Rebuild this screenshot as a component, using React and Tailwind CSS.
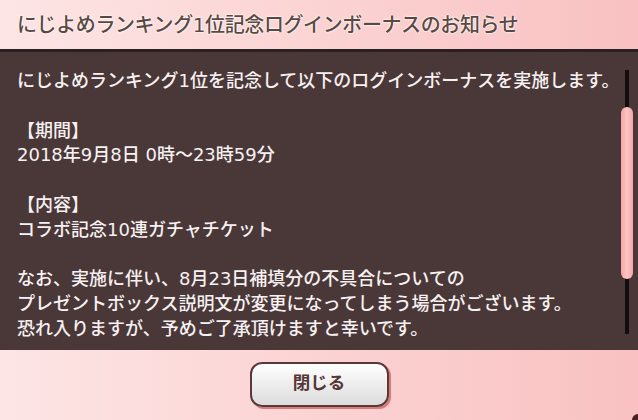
import React from "react";

const lines = [
  "にじよめランキング1位を記念して以下のログインボーナスを実施します。",
  "",
  "【期間】",
  "2018年9月8日 0時～23時59分",
  "",
  "【内容】",
  "コラボ記念10連ガチャチケット",
  "",
  "なお、実施に伴い、8月23日補填分の不具合についての",
  "プレゼントボックス説明文が変更になってしまう場合がございます。",
  "恐れ入りますが、予めご了承頂けますと幸いです。",
];

export default function App() {
  return (
    <div
      className="relative w-[638px] h-[420px] overflow-hidden flex flex-col"
      style={{ fontFamily: '"DejaVu Sans", "Noto Sans CJK JP", sans-serif' }}
    >
      <div className="h-[49px] shrink-0 bg-gradient-to-r from-[#fde5e5] to-[#f9c1c1] flex items-center pl-[17px]">
        <span className="text-[20px] leading-none font-medium text-[#5c4842] [text-shadow:0_0_2px_#fff,0_0_2px_#fff,0_0_1px_#fff] tracking-[-0.4px]">
          にじよめランキング1位記念ログインボーナスのお知らせ
        </span>
      </div>
      <div className="h-[3px] shrink-0 bg-[#2b2021]" />
      <div className="relative flex-1 bg-[#4a3839] overflow-hidden">
        <div className="pl-[17px] pt-[17px] text-[18px] leading-[24.8px] text-[#f7f1f1] font-medium">
          {lines.map((l, i) => (
            <div key={i} className="whitespace-nowrap h-[24.8px]">
              {l}
            </div>
          ))}
        </div>
        <div className="absolute left-[625px] top-[18px] w-[4px] h-[264px] bg-[#150d0d]" />
        <div className="absolute left-[621px] top-[55px] w-[12px] h-[172px] rounded-full bg-gradient-to-r from-[#f4a6a6] via-[#ffc4c4] to-[#f3a5a5]" />
      </div>
      <div className="h-[70px] shrink-0 bg-gradient-to-r from-[#fde5e5] to-[#f9c1c1] flex items-center justify-center pb-[2px]">
        <div className="w-[139px] h-[45px] rounded-[12px] border-2 border-[#583838] bg-gradient-to-b from-[#ffffff] to-[#dcdcdc] shadow-[2px_2px_0_#d77a7a] flex items-center justify-center">
          <span className="text-[17.5px] font-bold text-[#573636] leading-none">閉じる</span>
        </div>
      </div>
      <div className="absolute right-0 bottom-0 w-[6px] h-[6px] bg-[#4a1f22] rounded-tl-full" />
    </div>
  );
}
